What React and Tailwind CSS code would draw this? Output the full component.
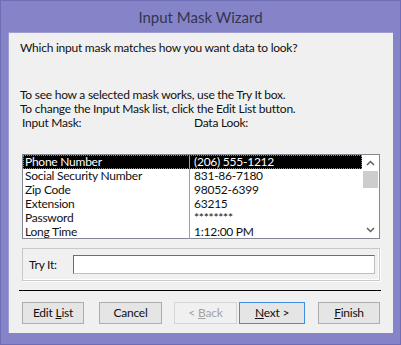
import React from "react";

const font = { fontFamily: 'Lato, "Noto Sans", sans-serif' };

function Btn({ children, disabled, focused, w }) {
  return (
    <div
      className={`h-[22px] flex items-center justify-center text-[12px] border ${
        disabled
          ? "border-[#d5d5d5] bg-[#f0f0f0] text-[#a3a3a3]"
          : focused
          ? "border-[#3c8fd8] bg-[#e5e5e5] text-[#111]"
          : "border-[#adadad] bg-[#e5e5e5] text-[#111]"
      } ${w}`}
    >
      {children}
    </div>
  );
}

const rows = [
  ["Phone Number", "(206) 555-1212"],
  ["Social Security Number", "831-86-7180"],
  ["Zip Code", "98052-6399"],
  ["Extension", "63215"],
  ["Password", "********"],
  ["Long Time", "1:12:00 PM"],
];

export default function App() {
  return (
    <div
      className="w-[401px] h-[345px] bg-[#8584c9] border border-[#6f6db5] flex flex-col"
      style={font}
    >
      <div className="h-[31px] flex items-center justify-center text-[15px] text-[#34344e] pt-[1px]">
        Input Mask Wizard
      </div>
      <div className="ml-[7px] w-[385px] h-[301px] bg-[#f0f0f0] border-t border-l border-[#9e9dd3] text-[12px] tracking-[-0.25px] text-[#111] flex flex-col">
        <div className="pl-[11px] mt-[8px] h-[14px] leading-[14px]">
          Which input mask matches how you want data to look?
        </div>
        <div className="pl-[11px] mt-[33px] h-[14px] leading-[14px]">
          To see how a selected mask works, use the Try It box.
        </div>
        <div className="pl-[11px] h-[13px] leading-[13px]">
          To change the Input Mask list, click the Edit List button.
        </div>
        <div className="flex h-[13px] leading-[13px] mt-[1px]">
          <div className="pl-[13px] w-[185px]">Input Mask:</div>
          <div>Data Look:</div>
        </div>
        <div className="ml-[13px] mt-[25px] w-[358px] h-[85px] border border-[#828790] bg-white flex">
          <div className="flex-1 flex flex-col">
            {rows.map((r, i) => (
              <div
                key={i}
                className={`h-[14px] flex leading-[14px] ${
                  i === 0 ? "bg-black text-white outline outline-1 outline-dotted outline-[#888] -outline-offset-1" : ""
                }`}
              >
                <div className="w-[167px] pl-[2px] border-r border-[#a0a0a0] whitespace-nowrap">
                  {r[0]}
                </div>
                <div className="pl-[4px] whitespace-nowrap">{r[1]}</div>
              </div>
            ))}
          </div>
          <div className="w-[17px] bg-white flex flex-col items-center">
            <div className="h-[16px] flex items-center justify-center">
              <svg width="9" height="6" viewBox="0 0 9 6">
                <path d="M1 5 L4.5 1.5 L8 5" fill="none" stroke="#606060" strokeWidth="1.5" />
              </svg>
            </div>
            <div className="w-[15px] h-[17px] bg-[#cdcdcd]" />
            <div className="flex-1" />
            <div className="h-[16px] flex items-center justify-center">
              <svg width="9" height="6" viewBox="0 0 9 6">
                <path d="M1 1 L4.5 4.5 L8 1" fill="none" stroke="#606060" strokeWidth="1.5" />
              </svg>
            </div>
          </div>
        </div>
        <div className="ml-[13px] mt-[9px] w-[358px] h-[33px] border border-[#c8c8c8] shadow-[inset_-1px_-1px_0_#fff,1px_1px_0_#fff] flex items-center">
          <div className="pl-[6px] w-[50px]">Try It:</div>
          <div className="w-[302px] h-[19px] bg-white border border-[#bfbfbf] border-t-[#6d6d6d] border-l-[#6d6d6d]" />
        </div>
        <div className="ml-[10px] mt-[9px] w-[362px] h-px bg-black" />
        <div className="flex ml-[13px] mt-[11px]">
          <Btn w="w-[62px]">
            Edit <span className="underline ml-[3px]">L</span>ist
          </Btn>
          <div className="w-[15px]" />
          <Btn w="w-[63px]">Cancel</Btn>
          <div className="w-[12px]" />
          <Btn disabled w="w-[63px]">
            &lt; <span className="underline ml-[3px]">B</span>ack
          </Btn>
          <div className="w-[2px]" />
          <Btn focused w="w-[66px]">
            <span className="underline">N</span>ext &gt;
          </Btn>
          <div className="w-[13px]" />
          <Btn w="w-[62px]">
            <span className="underline">F</span>inish
          </Btn>
        </div>
      </div>
    </div>
  );
}
